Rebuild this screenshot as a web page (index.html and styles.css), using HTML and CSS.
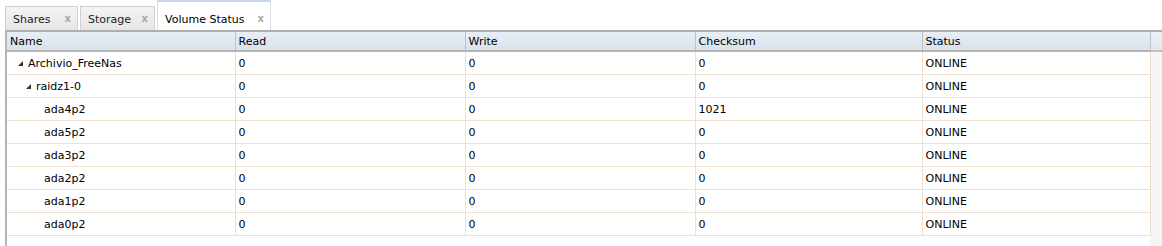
FILE: index.html
```html
<!DOCTYPE html>
<html lang="en">
<head>
  <meta charset="UTF-8">
  <title>Volume Status</title>
  <link rel="stylesheet" href="styles.css">
</head>
<body>
  <!-- tab strip -->
  <div class="tabs">
    <div class="tab">Shares<span class="close">x</span></div>
    <div class="tab">Storage<span class="close">x</span></div>
    <div class="tab active">Volume Status<span class="close">x</span></div>
  </div>

  <!-- volume tree grid -->
  <div class="panel">
    <div class="grid">
      <table>
        <colgroup>
          <col class="c-name"><col class="c-num"><col class="c-num"><col class="c-sum"><col class="c-status">
        </colgroup>
        <thead>
          <tr><th>Name</th><th>Read</th><th>Write</th><th>Checksum</th><th>Status</th></tr>
        </thead>
        <tbody>
          <tr><td><span class="lvl0"><span class="arrow"></span>Archivio_FreeNas</span></td><td>0</td><td>0</td><td>0</td><td>ONLINE</td></tr>
          <tr><td><span class="lvl1"><span class="arrow"></span>raidz1-0</span></td><td>0</td><td>0</td><td>0</td><td>ONLINE</td></tr>
          <tr><td><span class="lvl2">ada4p2</span></td><td>0</td><td>0</td><td>1021</td><td>ONLINE</td></tr>
          <tr><td><span class="lvl2">ada5p2</span></td><td>0</td><td>0</td><td>0</td><td>ONLINE</td></tr>
          <tr><td><span class="lvl2">ada3p2</span></td><td>0</td><td>0</td><td>0</td><td>ONLINE</td></tr>
          <tr><td><span class="lvl2">ada2p2</span></td><td>0</td><td>0</td><td>0</td><td>ONLINE</td></tr>
          <tr><td><span class="lvl2">ada1p2</span></td><td>0</td><td>0</td><td>0</td><td>ONLINE</td></tr>
          <tr><td><span class="lvl2">ada0p2</span></td><td>0</td><td>0</td><td>0</td><td>ONLINE</td></tr>
        </tbody>
      </table>
      <div class="filler"></div>
    </div>
  </div>
</body>
</html>
```

FILE: styles.css
```css
body {
  margin: 0;
  font-family: 'DejaVu Sans', Verdana, sans-serif;
  font-size: 11px;
  color: #000;
  background: #fff;
  height: 246px;
  overflow: hidden;
}

/* Tabs */
.tabs {
  display: flex;
  align-items: flex-end;
  height: 30px;
  padding-left: 5px;
  gap: 2px;
}

.tab {
  height: 24px;
  box-sizing: border-box;
  padding: 6px 0 0 7px;
  border: 1px solid #cfcfcf;
  border-bottom: none;
  background: linear-gradient(#f4f4f4, #e6e6e6);
  color: #222;
  display: flex;
  width: 73px;
}

.tab:nth-child(2) {
  width: 75px;
}

.tab.active {
  height: 30px;
  width: 114px;
  padding-top: 11px;
  background: #fff;
  border-color: #d6dde8;
  border-top: 2px solid #c9d8ee;
  color: #000;
}

.close {
  margin-left: auto;
  margin-right: 6px;
  color: #a8a8a8;
  font-weight: bold;
  font-size: 10px;
}

/* Grid */
.panel {
  margin-left: 5px;
  border-left: 2px solid #b4b4bc;
  height: 216px;
}

.grid {
  display: flex;
  align-items: flex-start;
  background: linear-gradient(to right, transparent 1143px, #f5f5f5 1143px);
  height: 216px;
}

table {
  border-collapse: collapse;
  table-layout: fixed;
  width: 1143px;
}

.c-name { width: 228px; }
.c-num { width: 230px; }
.c-sum { width: 227px; }
.c-status { width: 228px; }

th {
  height: 18px;
  text-align: left;
  font-weight: normal;
  padding: 0 3px;
  background: linear-gradient(#e8eef5, #d8e1eb);
  border-top: 2px solid #aeaeae;
  border-bottom: 2px solid #b4b4b4;
  border-right: 1px solid #c2c2c2;
}

td {
  height: 22px;
  padding: 0 3px;
  background: #fff;
  border-bottom: 1px solid #efdfcf;
  border-right: 1px solid #efdfcf;
  white-space: nowrap;
}

.filler {
  flex: 1;
  height: 18px;
  background: linear-gradient(#edf1f6, #e0e7ef);
  border-top: 2px solid #aeaeae;
  border-bottom: 2px solid #c0c0c0;
}

.lvl0 { padding-left: 8px; }
.lvl1 { padding-left: 16px; }
.lvl2 { padding-left: 34px; }

.arrow {
  display: inline-block;
  width: 0;
  height: 0;
  border-left: 5px solid transparent;
  border-bottom: 5px solid #333;
  margin-right: 5px;
  vertical-align: 1px;
}
```
